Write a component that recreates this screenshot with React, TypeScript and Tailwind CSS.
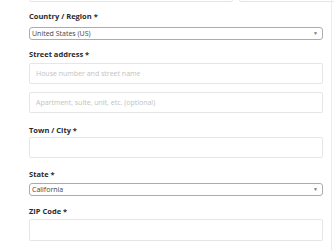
const font = { fontFamily: '"Open Sans", "Noto Sans", sans-serif' };

function Label({ text, className = "" }: { text: string; className?: string }) {
  return (
    <label className={`block h-[10px] text-[7.5px] leading-[10px] font-bold text-[#2a2a2a] ${className}`}>
      {text}
    </label>
  );
}

function TextInput({ placeholder = "", className = "" }: { placeholder?: string; className?: string }) {
  return (
    <input
      type="text"
      placeholder={placeholder}
      className={`block w-full h-[21px] px-[6px] rounded-[2px] border border-[#e6e6e6] bg-white text-[7px] text-[#555] placeholder:text-[#c2c2c2] outline-none ${className}`}
    />
  );
}

function SelectBox({ value, className = "" }: { value: string; className?: string }) {
  return (
    <div className={`flex items-center justify-between h-[13px] pl-[2px] pr-[4px] rounded-[3px] border border-[#acacac] bg-white ${className}`}>
      <span className="text-[7px] leading-[10px] text-[#444]">{value}</span>
      <span className="text-[5px] leading-none text-[#777]">▼</span>
    </div>
  );
}

export default function App() {
  return (
    <div className="w-[334px] h-[250px] overflow-hidden bg-white flex" style={font}>
      <div className="w-[331px] pl-[29px] pr-[8px] flex flex-col">
        <div className="flex gap-[6px] -mt-[19px]">
          <input className="block flex-1 h-[21px] rounded-[2px] border border-[#e6e6e6]" />
          <input className="block flex-1 h-[21px] rounded-[2px] border border-[#e6e6e6]" />
        </div>

        <Label text="Country / Region *" className="mt-[9px]" />
        <SelectBox value="United States (US)" className="mt-[6px]" />

        <Label text="Street address *" className="mt-[9px]" />
        <TextInput placeholder="House number and street name" className="mt-[4px]" />
        <TextInput placeholder="Apartment, suite, unit, etc. (optional)" className="mt-[8px]" />

        <Label text="Town / City *" className="mt-[12px]" />
        <TextInput className="mt-[2px]" />

        <Label text="State *" className="mt-[11px]" />
        <SelectBox value="California" className="mt-[4px]" />

        <Label text="ZIP Code *" className="mt-[10px]" />
        <TextInput className="mt-[3px] h-[22px]" />
      </div>
      <div className="w-px h-full bg-[#ececec]" />
    </div>
  );
}
